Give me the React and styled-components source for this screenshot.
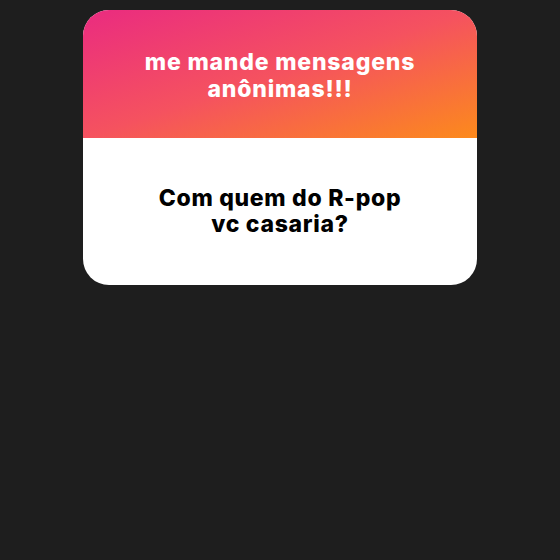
import React from "react";
import styled, { createGlobalStyle } from "styled-components";

const Global = createGlobalStyle`
  html, body { margin: 0; padding: 0; background: #1e1e1e; }
  body { width: 560px; height: 560px; font-family: Inter, "Liberation Sans", sans-serif; }
`;

const Page = styled.div`
  width: 560px;
  height: 560px;
  background: #1e1e1e;
  display: flex;
  justify-content: center;
  padding-top: 10px;
  box-sizing: border-box;
`;

const Card = styled.div`
  width: 394px;
  height: 275px;
  border-radius: 26px;
  overflow: hidden;
  display: flex;
  flex-direction: column;
  background: #fff;
`;

const Header = styled.div`
  height: 128px;
  background: linear-gradient(to bottom right, #ea2b80 0%, #f5525f 50%, #fc8a1c 100%);
  display: flex;
  align-items: center;
  justify-content: center;
  padding-top: 3px;
  box-sizing: border-box;
`;

const Title = styled.div`
  color: #fff;
  font-weight: 800;
  font-size: 23px;
  line-height: 27px;
  text-align: center;
  letter-spacing: 0.8px;
`;

const Body = styled.div`
  flex: 1;
  display: flex;
  align-items: center;
  justify-content: center;
  padding-bottom: 2px;
`;

const Question = styled.div`
  color: #000;
  font-weight: 800;
  font-size: 23px;
  line-height: 26px;
  text-align: center;
  letter-spacing: 0.7px;
`;

export default function App() {
  return (
    <>
      <Global />
      <Page>
        <Card>
          <Header>
            <Title>
              me mande mensagens
              <br />
              anônimas!!!
            </Title>
          </Header>
          <Body>
            <Question>
              Com quem do R-pop
              <br />
              vc casaria?
            </Question>
          </Body>
        </Card>
      </Page>
    </>
  );
}
